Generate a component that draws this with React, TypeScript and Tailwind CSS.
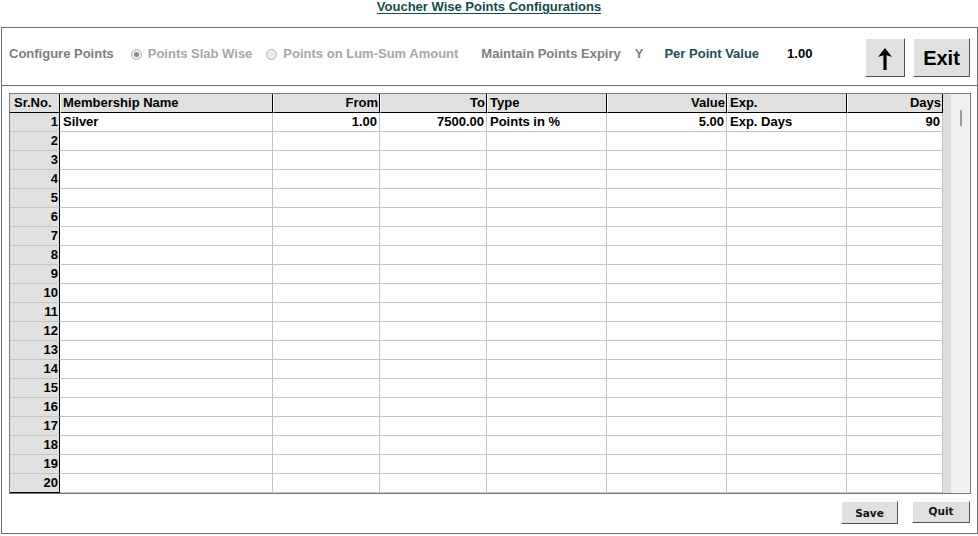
const font = { fontFamily: '"Liberation Sans", Arial, sans-serif' };

const cols = [
  { key: 'name', label: 'Membership Name', w: 'w-[213px]', right: false },
  { key: 'from', label: 'From', w: 'w-[107px]', right: true },
  { key: 'to', label: 'To', w: 'w-[107px]', right: true },
  { key: 'type', label: 'Type', w: 'w-[120px]', right: false },
  { key: 'value', label: 'Value', w: 'w-[120px]', right: true },
  { key: 'exp', label: 'Exp.', w: 'w-[120px]', right: false },
  { key: 'days', label: 'Days', w: 'w-[96px]', right: true },
];

const data: Record<string, string>[] = [
  { name: 'Silver', from: '1.00', to: '7500.00', type: 'Points in %', value: '5.00', exp: 'Exp. Days', days: '90' },
];

const rows = Array.from({ length: 20 }, (_, i) => data[i] ?? {});

function Radio({ checked }: { checked?: boolean }) {
  return (
    <span className="flex h-[11px] w-[11px] items-center justify-center rounded-full border border-[#b4b4b4] bg-[#ececec]">
      {checked && <span className="h-[5px] w-[5px] rounded-full bg-[#8a8a8a]" />}
    </span>
  );
}

export default function App() {
  return (
    <div className="h-[536px] w-[978px] bg-white text-[13px] font-bold text-black" style={font}>
      {/* Title */}
      <div className="h-[27px] text-center leading-[13px]">
        <span className="text-[#114d4d] underline underline-offset-[2px]">Voucher Wise Points Configurations</span>
      </div>

      <div className="ml-[1px] flex h-[507px] w-[977px] flex-col border border-[#6e6e6e]">
        {/* Config row */}
        <div className="flex h-[58px] shrink-0 items-center border-b border-[#6e6e6e] pl-[7px] pr-[7px]">
          <div className="mb-[5px] flex items-center">
            <span className="text-[#7d7d7d]">Configure Points</span>
            <span className="ml-[17px]"><Radio checked /></span>
            <span className="ml-[6px] text-[#a6a6a6]">Points Slab Wise</span>
            <span className="ml-[14px]"><Radio /></span>
            <span className="ml-[6px] text-[#a6a6a6]">Points on Lum-Sum Amount</span>
            <span className="ml-[23px] text-[#808080]">Maintain Points Expiry</span>
            <span className="ml-[14px] text-[#808080]">Y</span>
            <span className="ml-[21px] text-[#1d4d5a]">Per Point Value</span>
            <span className="ml-[28px]">1.00</span>
          </div>
          <div className="ml-auto mt-[2px] flex gap-[8px]">
            <button className="flex h-[39px] w-[40px] items-center justify-center border border-b-[#555] border-l-white border-r-[#555] border-t-white bg-[#e0e0e0] pt-[3px]">
              <svg width="16" height="24" viewBox="0 0 16 24">
                <path d="M8 1 L15 10 L9.6 8.2 L9.6 23 L6.4 23 L6.4 8.2 L1 10 Z" fill="#000" />
              </svg>
            </button>
            <button className="h-[39px] w-[57px] border border-b-[#555] border-l-white border-r-[#555] border-t-white bg-[#e0e0e0] text-[20px]">
              Exit
            </button>
          </div>
        </div>

        {/* Grid */}
        <div className="ml-[7px] mt-[7px] flex h-[401px] w-[962px] border border-[#7a7a7a]">
          <div className="flex w-[933px] flex-col">
            <div className="flex h-[19px] bg-[#e0e0e0] leading-[18px]">
              <div className="w-[50px] border-b border-r border-black pl-[4px]">Sr.No.</div>
              {cols.map((c) => (
                <div
                  key={c.key}
                  className={`${c.w} border-b border-l border-r border-b-black border-l-white border-r-black ${c.right ? 'pr-[1px] text-right' : 'pl-[2px]'}`}
                >
                  {c.label}
                </div>
              ))}
            </div>
            {rows.map((r, i) => (
              <div key={i} className="flex h-[19px] leading-[18px]">
                <div
                  className={`w-[50px] border-r border-black bg-[#e0e0e0] pr-[1px] text-right ${i === 19 ? 'border-b border-b-black' : 'border-b border-b-[#c4c4c4]'}`}
                >
                  {i + 1}
                </div>
                {cols.map((c) => (
                  <div
                    key={c.key}
                    className={`${c.w} border-b border-r border-[#c4c4c4] ${c.right ? 'pr-[2px] text-right' : 'pl-[3px]'}`}
                  >
                    {r[c.key] ?? ''}
                  </div>
                ))}
              </div>
            ))}
          </div>
          {/* Scrollbar */}
          <div className="flex w-[27px]">
            <div className="w-[8px] bg-[#dcdcdc]" />
            <div className="flex-1 bg-[#f0f0f0] pl-[9px] pt-[16px]">
              <div className="h-[16px] w-[2px] bg-[#9a9a9a]" />
            </div>
          </div>
        </div>

        {/* Bottom buttons */}
        <div
          className="mt-[7px] flex justify-end gap-[14px] pr-[7px] text-[10.5px]"
          style={{ fontFamily: '"DejaVu Sans", Verdana, sans-serif' }}
        >
          <button className="h-[23px] w-[57px] border border-b-[#555] border-l-white border-r-[#555] border-t-white bg-[#e0e0e0] pt-[2px] text-[#111]">
            Save
          </button>
          <button className="h-[22px] w-[58px] border border-b-[#555] border-l-white border-r-[#555] border-t-white bg-[#e0e0e0] text-[#111]">
            Quit
          </button>
        </div>
      </div>
    </div>
  );
}
